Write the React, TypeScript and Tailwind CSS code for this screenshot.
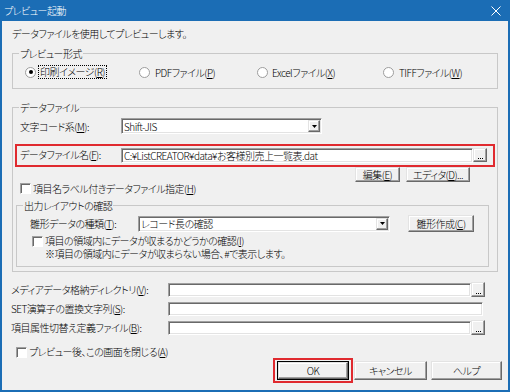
import React from 'react';

const sunken =
  'bg-white border border-t-[#a0a0a0] border-l-[#a0a0a0] border-b-white border-r-white shadow-[inset_1px_1px_0_#696969,inset_-1px_-1px_0_#e3e3e3]';
const raised =
  'bg-[#f0f0f0] border border-t-[#e3e3e3] border-l-[#e3e3e3] border-b-[#696969] border-r-[#696969] shadow-[inset_-1px_-1px_0_#a0a0a0,inset_1px_1px_0_#fff]';

function U({ c }: { c: string }) {
  return <span className="underline underline-offset-[1px]">{c}</span>;
}

function Radio({ checked }: { checked?: boolean }) {
  return (
    <span className="flex h-[11px] w-[11px] shrink-0 items-center justify-center rounded-full border border-[#9d9d9d] bg-white">
      {checked && <span className="h-[4px] w-[4px] rounded-full bg-black" />}
    </span>
  );
}

function Check() {
  return (
    <span className="h-[11px] w-[11px] shrink-0 border border-t-[#a0a0a0] border-l-[#a0a0a0] border-b-white border-r-white bg-white shadow-[inset_1px_1px_0_#696969]" />
  );
}

function Browse({ h = 'h-[14px]' }: { h?: string }) {
  return (
    <span className={`${raised} ${h} flex w-[14px] shrink-0 items-end justify-center pb-[2px]`}>
      <svg width="5" height="1" viewBox="0 0 5 1">
        <rect x="0" y="0" width="1" height="1" fill="#000" />
        <rect x="2" y="0" width="1" height="1" fill="#000" />
        <rect x="4" y="0" width="1" height="1" fill="#000" />
      </svg>
    </span>
  );
}

function Select({ value, w }: { value: string; w: string }) {
  return (
    <div className={`${sunken} ${w} flex h-[16px] items-center pl-[2px] pr-[1px]`}>
      <span className="flex-1 truncate">{value}</span>
      <span className={`${raised} flex h-[12px] w-[12px] items-center justify-center`}>
        <svg width="5" height="3" viewBox="0 0 5 3">
          <path d="M0 0h5L2.5 3z" fill="#000" />
        </svg>
      </span>
    </div>
  );
}

function Button({ children, w, h = 'h-[15px]' }: { children: React.ReactNode; w: string; h?: string }) {
  return <div className={`${raised} ${w} ${h} flex items-center justify-center whitespace-nowrap`}>{children}</div>;
}

export default function App() {
  return (
    <div className="flex h-[392px] w-[510px] flex-col overflow-hidden whitespace-nowrap bg-[#1b6db5] font-['Noto_Sans_CJK_JP',sans-serif] text-[10px] font-light leading-[13px] tracking-[-0.5px] text-black [font-feature-settings:'palt']">
      <div className="flex h-[21px] shrink-0 items-center justify-between pl-[4px] pr-[9px] text-white">
        <span>プレビュー起動</span>
        <svg width="10" height="10" viewBox="0 0 10 10">
          <path d="M0.5 0.5l9 9M9.5 0.5l-9 9" stroke="#fff" strokeWidth="1" />
        </svg>
      </div>

      <div className="mx-[2px] mb-[2px] flex flex-1 flex-col overflow-hidden bg-[#f0f0f0]">
        <p className="pl-[10px] pt-[6px]">データファイルを使用してプレビューします。</p>

        <fieldset className="ml-[10px] mt-[7px] w-[486px] border border-[#c8c8c8] pb-[9px]">
          <legend className="ml-[6px] px-[1px]">プレビュー形式</legend>
          <div className="mt-[5px] flex h-[14px] items-center pl-[12px]">
            <div className="flex w-[114px] items-center gap-[2px]">
              <Radio checked />
              <span className="border border-dotted border-black px-[1px] leading-[12px]">
                印刷イメージ(<U c="R" />)
              </span>
            </div>
            <div className="flex w-[118px] items-center gap-[5px]">
              <Radio />
              <span>
                PDFファイル(<U c="P" />)
              </span>
            </div>
            <div className="flex w-[126px] items-center gap-[4px]">
              <Radio />
              <span>
                Excelファイル(<U c="X" />)
              </span>
            </div>
            <div className="flex items-center gap-[5px]">
              <Radio />
              <span>
                TIFFファイル(<U c="W" />)
              </span>
            </div>
          </div>
        </fieldset>

        <fieldset className="ml-[10px] mt-[12px] w-[486px] border border-[#c8c8c8] pb-[4px]">
          <legend className="ml-[6px] px-[1px]">データファイル</legend>
          <div className="mt-[4px] flex h-[16px] items-center pl-[7px]">
            <span className="w-[101px]">
              文字コード系(<U c="M" />):
            </span>
            <Select value="Shift-JIS" w="w-[201px]" />
          </div>

          <div className="ml-[2px] mt-[10px] flex h-[23px] w-[480px] items-start border-2 border-[#e02a2f] pl-[3px] pt-[1px]">
            <span className="mt-[1px] w-[101px]">
              データファイル名(<U c="F" />):
            </span>
            <div className={`${sunken} mt-[1px] flex h-[15px] w-[352px] items-center pl-[2px]`}>
              C:¥ListCREATOR¥data¥お客様別売上一覧表.dat
            </div>
            <div className="mt-[1px]">
              <Browse />
            </div>
          </div>

          <div className="flex h-[15px] justify-end gap-[6px] pr-[27px]">
            <Button w="w-[45px]">
              編集(<U c="E" />)
            </Button>
            <Button w="w-[64px]">
              エディタ(<U c="D" />)...
            </Button>
          </div>

          <div className="flex h-[13px] items-center gap-[2px] pl-[7px]">
            <Check />
            <span>
              項目名ラベル付きデータファイル指定(<U c="H" />)
            </span>
          </div>

          <fieldset className="ml-[3px] mt-[4px] w-[473px] border border-[#c8c8c8] pb-[6px]">
            <legend className="ml-[6px] px-[1px]">出力レイアウトの確認</legend>
            <div className="mt-[3px] flex h-[17px] items-center pl-[13px]">
              <span className="w-[108px]">
                雛形データの種類(<U c="T" />):
              </span>
              <Select value="レコード長の確認" w="w-[252px]" />
              <div className="ml-[18px]">
                <Button w="w-[66px]" h="h-[17px]">
                  雛形作成(<U c="C" />)
                </Button>
              </div>
            </div>
            <div className="mt-[3px] flex h-[12px] items-center gap-[2px] pl-[15px] leading-[12px]">
              <Check />
              <span>
                項目の領域内にデータが収まるかどうかの確認(<U c="I" />)
              </span>
            </div>
            <div className="mt-[1px] flex h-[12px] items-center pl-[28px] leading-[12px]">
              ※項目の領域内にデータが収まらない場合、#で表示します。
            </div>
          </fieldset>
        </fieldset>

        <div className="mt-[10px] flex h-[15px] items-center pl-[9px]">
          <span className="w-[157px]">
            メディアデータ格納ディレクトリ(<U c="V" />):
          </span>
          <div className={`${sunken} h-[14px] w-[303px]`} />
          <Browse h="h-[15px]" />
        </div>
        <div className="mt-[4px] flex h-[15px] items-center pl-[9px]">
          <span className="w-[157px]">
            SET演算子の置換文字列(<U c="S" />):
          </span>
          <div className={`${sunken} h-[14px] w-[315px]`} />
        </div>
        <div className="mt-[4px] flex h-[15px] items-center pl-[9px]">
          <span className="w-[157px]">
            項目属性切替え定義ファイル(<U c="B" />):
          </span>
          <div className={`${sunken} h-[14px] w-[303px]`} />
          <Browse h="h-[15px]" />
        </div>

        <div className="mt-[11px] flex h-[12px] items-center gap-[2px] pl-[14px] leading-[12px]">
          <Check />
          <span>
            プレビュー後、この画面を閉じる(<U c="A" />)
          </span>
        </div>

        <div className="flex h-[25px] items-start justify-end pr-[6px]">
          <div className="h-[25px] w-[80px] border-2 border-[#e02a2f] pl-[2px] pt-[1px]">
            <div className="h-[19px] w-[72px] border border-black">
              <div className={`${raised} flex h-full w-full items-center justify-center`}>OK</div>
            </div>
          </div>
          <div className="ml-[1px] mt-[3px]">
            <Button w="w-[73px]" h="h-[19px]">
              キャンセル
            </Button>
          </div>
          <div className="ml-[4px] mt-[3px]">
            <Button w="w-[71px]" h="h-[19px]">
              ヘルプ
            </Button>
          </div>
        </div>
      </div>
    </div>
  );
}
